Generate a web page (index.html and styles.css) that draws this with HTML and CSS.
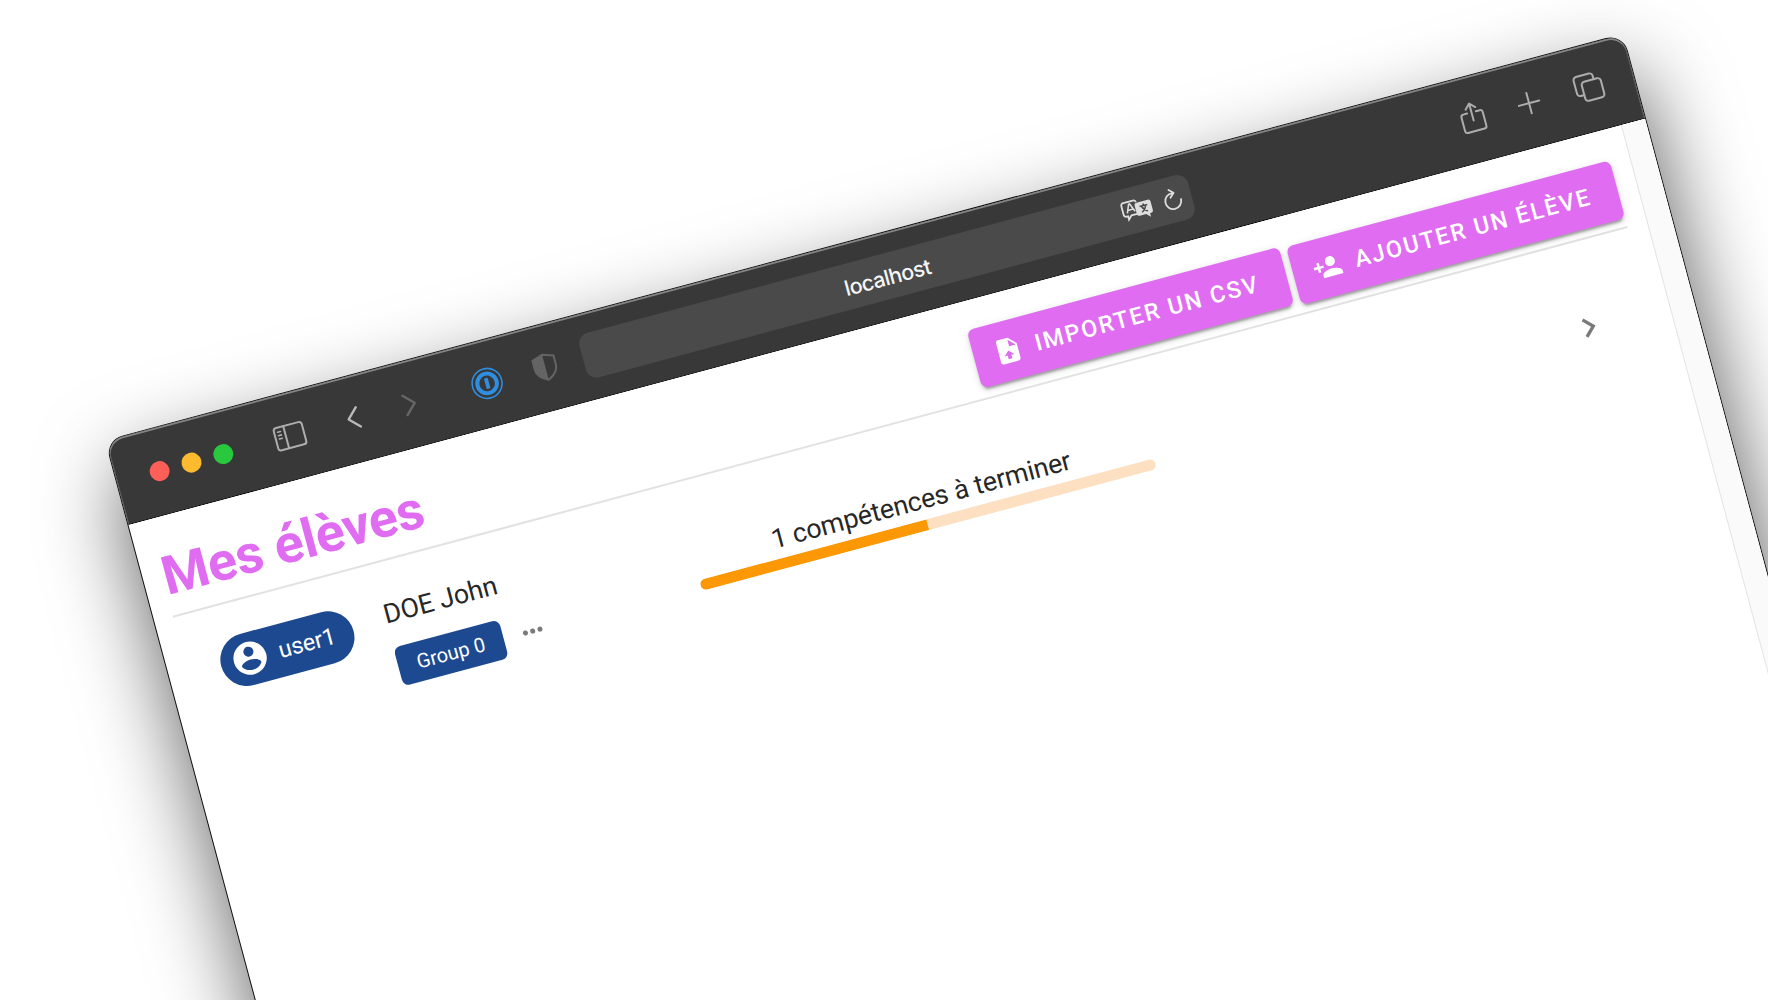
FILE: index.html
```html
<!DOCTYPE html>
<html lang="fr">
<head>
<meta charset="utf-8">
<title>Mes élèves</title>
<link rel="stylesheet" href="styles.css">
</head>
<body>
<div class="stage">
  <div class="window">
    <div class="toolbar">
      <div class="lights"><span class="light red"></span><span class="light yellow"></span><span class="light green"></span></div>
      <svg class="ic sidebar" viewBox="0 0 32 26"><rect x="1.5" y="1.5" width="29" height="23" rx="3"/><path d="M12 1.5v23"/><path class="thin" d="M5 6h3M5 9.500h3M5 13h3"/></svg>
      <svg class="ic back" viewBox="0 0 14 24"><path d="M12 2L2 12l10 10"/></svg>
      <svg class="ic forward" viewBox="0 0 14 24"><path d="M2 2l10 10L2 22"/></svg>
      <svg class="onepass" viewBox="0 0 32 32"><circle cx="16" cy="16" r="15" fill="none" stroke="#2f8ee0" stroke-width="1.600"/><circle cx="16" cy="16" r="9.800" fill="none" stroke="#2f8ee0" stroke-width="4"/><rect x="14.200" y="10.500" width="3.800" height="11" rx=".6" fill="#2f8ee0"/></svg>
      <svg class="shield" viewBox="0 0 24 28"><path d="M12 1.500L22.500 5v9c0 5.500-4 9.500-10.500 12.500C5.500 23.500 1.500 19.500 1.500 14V5z" fill="none" stroke="#646464" stroke-width="2"/><path d="M12 1.500v25C5.500 23.500 1.500 19.500 1.500 14V5z" fill="#646464"/></svg>
      <div class="address">
        <span class="host">localhost</span>
        <svg class="translate" viewBox="0 0 32 22"><path d="M15 15.500H9l-3.500 3.500v-3.500H4A2.500 2.500 0 0 1 1.500 13V4A2.500 2.500 0 0 1 4 1.500h10A2.500 2.500 0 0 1 16.500 4" fill="none" stroke="#dedede" stroke-width="1.800"/><path d="M5.500 12.500L9 4h1l3.500 8.500M6.800 9.800h5.400" fill="none" stroke="#dedede" stroke-width="1.600"/><path d="M18 4.500h10.500A2.500 2.500 0 0 1 31 7v8.500a2.500 2.500 0 0 1-2.500 2.500h-1v4l-4-4H17a2.500 2.500 0 0 1-2.500-2.500V7A2.500 2.500 0 0 1 17 4.500z" fill="#dedede"/><path d="M19 9h8M23 7v2M20 15.200c2.800-1.200 4.600-3.300 5-6.200M21 9.500c.8 2.500 2.600 4.600 5.200 5.700" fill="none" stroke="#4a4a4a" stroke-width="1.500"/></svg>
        <svg class="reload" viewBox="0 0 20 24"><path d="M11 5.500a8 8 0 1 0 7 8M8.200 1.500l4.200 4-4.200 4" fill="none" stroke="#dedede" stroke-width="1.800" stroke-linecap="round" stroke-linejoin="round"/></svg>
      </div>
      <svg class="ic share" viewBox="0 0 26 32"><path d="M8.500 11H4.500a2.500 2.500 0 0 0-2.500 2.500v14A2.500 2.500 0 0 0 4.500 30h17a2.500 2.500 0 0 0 2.500-2.500v-14a2.500 2.500 0 0 0-2.500-2.500h-4M13 19.500V2M8 6.800L13 1.800l5 5"/></svg>
      <svg class="ic plus" viewBox="0 0 24 24"><path d="M12 1.500v21M1.500 12h21"/></svg>
      <svg class="ic tabs" viewBox="0 0 30 30"><path d="M8.500 21.500H5A3.200 3.200 0 0 1 1.800 18.300V5A3.200 3.200 0 0 1 5 1.800h13.300A3.200 3.200 0 0 1 21.500 5v3.500"/><rect x="8.500" y="8.500" width="19.700" height="19.700" rx="3.200"/></svg>
    </div>
    <div class="viewport">
      <div class="page">
        <div class="header">
          <h1>Mes élèves</h1>
          <div class="actions">
            <button class="btn import"><svg viewBox="0 0 24 24"><path d="M14 2H6c-1.110 0-2 .89-2 2v16c0 1.110.89 2 2 2h12c1.110 0 2-.89 2-2V8l-6-6m-.5 7V3.500L19 9h-5.500M12 12l4 4h-2.500v3h-3v-3H8l4-4z"/></svg>Importer un CSV</button>
            <button class="btn"><svg viewBox="0 0 24 24"><path d="M15 14c-2.670 0-8 1.330-8 4v2h16v-2c0-2.670-5.330-4-8-4m-9-4V7H4v3H1v2h3v3h2v-3h3v-2m6 2a4 4 0 0 0 4-4 4 4 0 0 0-4-4 4 4 0 0 0-4 4 4 4 0 0 0 4 4z"/></svg>Ajouter un élève</button>
          </div>
        </div>
        <div class="row">
          <div class="user"><svg viewBox="0 0 24 24"><path d="M12 19.200c-2.500 0-4.710-1.280-6-3.200.03-2 4-3.100 6-3.100s5.970 1.100 6 3.100a7.232 7.232 0 0 1-6 3.200M12 5a3 3 0 0 1 3 3 3 3 0 0 1-3 3 3 3 0 0 1-3-3 3 3 0 0 1 3-3m0-3A10 10 0 0 0 2 12a10 10 0 0 0 10 10 10 10 0 0 0 10-10c0-5.530-4.500-10-10-10z"/></svg>user1</div>
          <div class="identity">
            <div class="name">DOE John</div>
            <div class="groups"><span class="group">Group 0</span><svg class="dots" viewBox="0 0 24 24"><path d="M16 12a2 2 0 1 1 4 0 2 2 0 0 1-4 0m-6 0a2 2 0 1 1 4 0 2 2 0 0 1-4 0m-6 0a2 2 0 1 1 4 0 2 2 0 0 1-4 0z"/></svg></div>
          </div>
          <div class="skills">
            <div class="label">1 compétences à terminer</div>
            <div class="bar"><div class="fill" style="width:50%"></div></div>
          </div>
          <svg class="next" viewBox="0 0 24 24"><path d="M8.590 16.580L13.170 12 8.590 7.410 10 6l6 6-6 6-1.410-1.420z"/></svg>
        </div>
      </div>
      <div class="scroll"></div>
    </div>
  </div>
</div>
</body>
</html>
```
FILE: styles.css
```css
* { box-sizing: border-box; }
body { margin: 0; background: #fff; font-family: Roboto, "Liberation Sans", sans-serif; }
svg { display: block; flex: none; }
.stage { width: 1768px; height: 1000px; overflow: hidden; background: #fff; }
.window {
  width: 1570px;
  height: 1250px;
  display: flex;
  flex-direction: column;
  border-radius: 17px;
  background: #fff;
  transform: translate(106px, 441px) rotate(-15deg);
  transform-origin: 0 0;
  box-shadow: 0 0 0 1px #111, 0 36px 84px rgba(0, 0, 0, .65);
}

/* browser toolbar */
.toolbar {
  height: 87px;
  flex: none;
  display: flex;
  align-items: center;
  padding: 0 0 1px 33.500px;
  background: #383838;
  border-radius: 17px 17px 0 0;
  border-bottom: 1.500px solid #000;
  box-shadow: inset 0 1.700px 0 #858585, inset 1px 0 0 #5c5c5c, inset -1px 0 0 #5c5c5c;
}
.lights { display: flex; gap: 13.200px; }
.light { width: 20px; height: 20px; border-radius: 50%; }
.red { background: #fc5f58; }
.yellow { background: #fcbb2f; }
.green { background: #29c93f; }
.ic { fill: none; stroke: #adadad; stroke-width: 2; stroke-linecap: round; stroke-linejoin: round; }
.ic .thin { stroke-width: 1.600; }
.sidebar { width: 32px; height: 26px; margin-left: 43px; }
.back { width: 14px; height: 24px; margin-left: 43px; margin-bottom: 1px; stroke: #b8b8b8; stroke-width: 2.400; }
.forward { width: 14px; height: 24px; margin-left: 44.500px; stroke: #666; stroke-width: 2.400; }
.onepass { width: 32px; height: 32px; margin-left: 56.500px; }
.shield { width: 25px; height: 29px; margin-left: 32.500px; margin-bottom: 1px; }
.address {
  width: 630px;
  height: 46px;
  margin-left: 25.500px;
  padding-right: 9px;
  display: grid;
  grid-template-columns: 271px auto 1fr 32px 31px;
  align-items: center;
  background: #4a4a4a;
  border-radius: 11px;
}
.host { grid-column: 2; padding-top: 3px; color: #f5f5f5; font: 500 21.500px Inter, sans-serif; letter-spacing: -.025em; }
.translate { grid-column: 4; width: 32px; height: 22px; }
.reload { grid-column: 5; justify-self: end; width: 20px; height: 24px; margin-top: 1px; }
.share { width: 26px; height: 32px; margin-left: 279px; margin-bottom: 2.500px; }
.plus { width: 24px; height: 24px; margin-left: 33.500px; margin-bottom: 2px; }
.tabs { width: 30px; height: 30px; margin-left: 34.500px; margin-bottom: 2px; }

/* page content */
.viewport { flex: 1; display: flex; }
.page { width: 1545px; padding: 0 20.500px 0 19px; }
.scroll { flex: 1; background: #fafafa; border-left: 1.700px solid #e4e4e4; }
.header {
  height: 101px;
  padding-top: 30.500px;
  display: flex;
  align-items: flex-start;
  justify-content: space-between;
  border-bottom: 2px solid #e2e2e2;
}
h1 { margin: 0; padding-left: .5px; font-size: 53.600px; line-height: 58px; font-weight: 700; letter-spacing: -.28px; color: #e06cf2; }
.actions { display: flex; gap: 7px; }
.btn {
  height: 60px;
  display: flex;
  align-items: center;
  padding: 0 27px 0 20px;
  border: 0;
  border-radius: 6.700px;
  background: #e06cf2;
  color: #fff;
  font: 500 23.450px Roboto, sans-serif;
  letter-spacing: 1.920px;
  text-transform: uppercase;
  white-space: nowrap;
  box-shadow: 0 5px 2px -3px rgba(0, 0, 0, .2), 0 3px 3px rgba(0, 0, 0, .14), 0 2px 8px rgba(0, 0, 0, .12);
}
.import { margin-top: -1.600px; padding-right: 28.500px; }
.btn svg { width: 30px; height: 30px; margin-right: 13.400px; fill: #fff; }
.row { display: flex; align-items: flex-start; color: #272727; }
.user {
  width: 137px;
  height: 53.600px;
  margin: 32.500px 0 0 33.500px;
  padding-left: 10px;
  display: flex;
  align-items: center;
  gap: 10px;
  border-radius: 27px;
  background: #1c4990;
  color: #fff;
  font-size: 23.450px;
}
.user svg { width: 40px; height: 40px; fill: #fff; }
.identity { width: 313px; margin: 32px 0 0 34px; }
.name { font-size: 26.800px; line-height: 40px; letter-spacing: -.12px; }
.groups { display: flex; align-items: center; margin: 13.500px 0 0 .5px; }
.group {
  width: 108.500px;
  height: 40px;
  border-radius: 6.700px;
  background: #1c4990;
  color: #fff;
  font-size: 20.100px;
  line-height: 40px;
  text-align: center;
}
.dots { width: 30px; height: 30px; margin-left: 15px; fill: #7a7a7a; }
.skills { width: 471px; margin-top: 64.500px; }
.label { font-size: 26.800px; line-height: 30px; letter-spacing: -.12px; text-align: center; }
.bar { height: 11.700px; margin-top: 5px; border-radius: 6px; overflow: hidden; background: #fde0c2; }
.fill { height: 100%; background: #fb9803; }
.next { width: 40px; height: 40px; margin: 66px 43px 0 auto; fill: #7a7a7a; }
```
